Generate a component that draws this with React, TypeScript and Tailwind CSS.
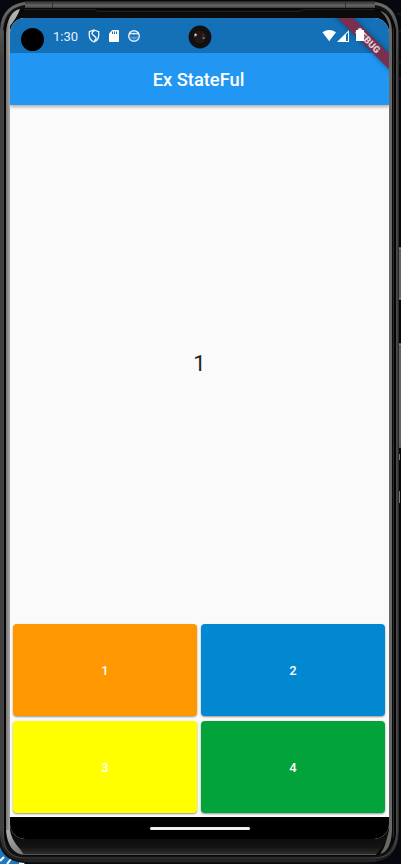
import React from "react";

function DeviceFrame() {
  return (
    <svg className="absolute inset-0" width="401" height="864" viewBox="0 0 401 864" fill="none" aria-hidden="true">
      <defs>
        <linearGradient id="rim" x1="0" y1="0" x2="0" y2="864" gradientUnits="userSpaceOnUse">
          <stop offset="0" stopColor="#292929" />
          <stop offset="0.003" stopColor="#666" />
          <stop offset="0.007" stopColor="#6b6b6b" />
          <stop offset="0.03" stopColor="#555" />
          <stop offset="0.07" stopColor="#404040" />
          <stop offset="0.96" stopColor="#404040" />
          <stop offset="1" stopColor="#191919" />
        </linearGradient>
        <linearGradient id="topRim" x1="0" y1="1" x2="0" y2="8" gradientUnits="userSpaceOnUse">
          <stop offset="0" stopColor="#262626" />
          <stop offset="0.35" stopColor="#4a4a4a" />
          <stop offset="0.65" stopColor="#666" />
          <stop offset="1" stopColor="#3a3a3a" />
        </linearGradient>
        <linearGradient id="chin" x1="0" y1="839" x2="0" y2="855" gradientUnits="userSpaceOnUse">
          <stop offset="0" stopColor="#0e0e0e" />
          <stop offset="0.5" stopColor="#131313" />
          <stop offset="1" stopColor="#303030" />
        </linearGradient>
        <linearGradient id="shineL" x1="6" y1="0" x2="23" y2="0" gradientUnits="userSpaceOnUse">
          <stop offset="0" stopColor="#777" />
          <stop offset="0.25" stopColor="#aaa" />
          <stop offset="1" stopColor="#bbb" />
        </linearGradient>
        <linearGradient id="shineFoot" x1="12" y1="832" x2="22" y2="855" gradientUnits="userSpaceOnUse">
          <stop offset="0" stopColor="#aaa" />
          <stop offset="1" stopColor="#777" />
        </linearGradient>
      </defs>
      <path d="M0 846H25V864H0Z" fill="#1f78bd" />
      <path d="M0 861L4 857M7 864L11 859M19 863.5H24" stroke="#fff" strokeWidth="2" />
      <path d="M397 14H401M397 31H401M397 62H401M397 79H401" stroke="#252a31" />
      <path d="M399 248H401V299H399ZM399 344H401V446H399Z" fill="#626262" />
      <path d="M399 248H401M399 299H401M399 344H401M399 447H401" stroke="#aaa" />
      <path d="M399.5 454V460M399.5 491V503" stroke="#777" />
      <path d="M0 24Q5 1 30 1H369Q399 1 399 34V831Q399 863 366 863H28Q6 863 0 847Z" fill="#111" />
      <path d="M1.5 30Q3 4 30 3H369Q397 3 397 34V831Q397 861 366 861H30Q3 860 1.5 835Z" stroke="url(#rim)" strokeWidth="3" />
      <path d="M25 1H375V8H25Z" fill="url(#topRim)" />
      <path d="M52.5 2V8M345.5 2V8" stroke="#303030" />
      <rect x="4.5" y="9" width="391" height="846" rx="25" fill="#0b0b0b" stroke="#070707" strokeWidth="2" />
      <path d="M24 9.5H95L98 11.5H299L303 9.5H375" stroke="#202020" />
      <path d="M3.5 30V835Q3.5 858 26 858H373Q396.5 858 396.5 835V30" stroke="#484848" />
      <path d="M5 30V835M395 30V835" stroke="#050505" strokeWidth="2" />
      <path d="M393.5 28V837" stroke="#292929" />
      <path d="M10 836H389L376 855H24Z" fill="url(#chin)" />
      <path d="M24 854.5H376" stroke="#555" />
      <path d="M24 860.5H376" stroke="#272727" strokeWidth="2" />
      <path d="M6 33C7 20 11 11 20 9C18 15 14 21 10 26V830H6Z" fill="url(#shineL)" />
      <path d="M6 830H10C12 843 20 847 24 855C13 854 7 845 6 830Z" fill="url(#shineFoot)" />
      <path d="M389 25C387 19 385 15 380 11C389 13 392 22 392 33V831C391 846 387 852 380 854C385 848 386 842 389 830Z" fill="#696969" />
    </svg>
  );
}

function StatusBar() {
  return (
    <div className="flex h-[35px] shrink-0 items-center bg-[#1470b7] pl-[10.5px] pr-[23px] text-white">
      <span className="mt-2 size-[23px] rounded-full bg-black" />
      <span className="ml-[9.5px] mt-0.5 w-[27px] whitespace-nowrap text-[13px] leading-4 text-[#e3f0fa]">1:30</span>
      <svg className="ml-2 mt-px" width="12" height="14" viewBox="0 0 12 14" fill="none">
        <path d="M6 1L10.7 2.7V6.2C10.7 9.5 8.8 11.8 6 13C3.2 11.8 1.3 9.5 1.3 6.2V2.7Z" stroke="#eef6fc" strokeWidth="1.3" />
        <path d="M6.6 1.5C4.2 2.7 3.4 4.2 4.6 5.4L7.6 8.2C8.6 9.4 8 10.8 6.3 12" stroke="#eef6fc" strokeWidth="1.4" />
      </svg>
      <svg className="ml-[9px] mt-px" width="10" height="12" viewBox="0 0 10 12">
        <path d="M3.3 0H9Q10 0 10 1V11Q10 12 9 12H1Q0 12 0 11V3.4Z" fill="#fff" />
        <path d="M3.5 1.5V4M5.5 1.5V4M7.5 1.5V4" stroke="#1470b7" />
      </svg>
      <svg className="ml-[9px] mt-px" width="12" height="12" viewBox="0 0 12 12" fill="none">
        <circle cx="6" cy="6" r="5.3" stroke="#e6f2fa" strokeWidth="1.4" />
        <path d="M1.5 1.8L4 3Q6 2.4 8 3L10.5 1.8L10.8 4.5H1.2Z" fill="#e6f2fa" />
        <path d="M2.5 6L4.5 7L6 6.2L7.8 7L9.5 6V7.8L6.2 9.8L2.7 7.8Z" fill="#5d9cce" />
        <path d="M3.5 4L4.8 5M8.5 4L7.2 5" stroke="#1470b7" />
      </svg>
      <svg className="ml-12 mt-0.5" width="24" height="24" viewBox="0 0 24 24">
        <circle cx="12" cy="12" r="11.4" fill="#111" />
        <circle cx="12" cy="12" r="6.2" fill="#211817" />
        <path d="M6 9L8 8L9 11L6 12Z" fill="#765c54" />
        <circle cx="7.7" cy="9.7" r="1" fill="#eee0d9" />
        <circle cx="15.6" cy="13" r="1.2" fill="#93623b" />
        <circle cx="15.2" cy="10" r="0.9" fill="#582e29" />
      </svg>
      <svg className="ml-auto mt-px" width="44" height="14" viewBox="0 0 44 14">
        <path d="M0.4 3.2Q7.2 -1.2 14 3.2L7.2 12.2Z" fill="#fff" />
        <path d="M27 1V13H15Z" fill="#fff" />
        <path d="M24 5.5L26 3.5V12H24Z" fill="#1470b7" />
      </svg>
    </div>
  );
}

const tiles = [
  { label: "1", color: "bg-[#ff9800]" },
  { label: "2", color: "bg-[#0288d1]" },
  { label: "3", color: "bg-[#ffff00]" },
  { label: "4", color: "bg-[#02a33b]" },
];

export default function App() {
  return (
    <div className="relative h-[864px] w-[401px] overflow-hidden bg-[#05080e] pl-2.5 pt-[18px] font-[Roboto,sans-serif]">
      <DeviceFrame />
      <main className="relative flex h-[821px] w-[379px] flex-col overflow-hidden rounded-[15px] bg-[#fafafa]">
        <StatusBar />
        <header className="relative z-10 flex h-[52px] shrink-0 items-center justify-center bg-[#2196f3] pr-0.5 pt-px shadow-[0_2px_3px_rgba(0,0,0,0.3)]">
          <h1 className="text-[18.3px] font-medium leading-6 text-white">Ex StateFul</h1>
        </header>
        <section className="flex flex-1 items-center justify-center pb-0.5">
          <span className="text-[22px] leading-7 text-[#212121]">1</span>
        </section>
        <section className="grid shrink-0 grid-cols-2 gap-x-1 gap-y-[5px] pb-1 pl-[3px] pr-1">
          {tiles.map((tile) => (
            <button
              key={tile.label}
              className={`h-[92px] rounded-[4px] pt-0.5 text-[13px] font-medium leading-4 text-white shadow-[0_1px_2px_rgba(0,0,0,0.4)] ${tile.color}`}
            >
              {tile.label}
            </button>
          ))}
        </section>
        <nav className="flex h-[22px] shrink-0 items-center justify-center bg-black">
          <span className="h-[3px] w-[100px] rounded-full bg-[#eee]" />
        </nav>
        <div className="absolute -right-[34px] top-[17px] z-20 flex h-[11px] w-[110px] rotate-45 items-center justify-center bg-[#792f4d] text-[9.5px] font-black leading-none text-[#e0cfd7] shadow-[0_0_5px_rgba(0,0,0,0.4)]">
          DEBUG
        </div>
        <svg className="absolute right-[25px] top-2.5 z-30" width="8" height="14" viewBox="0 0 8 14">
          <path d="M0 2H2.3V0.5H5.7V2H8V13H0Z" fill="#fff" />
        </svg>
      </main>
    </div>
  );
}
